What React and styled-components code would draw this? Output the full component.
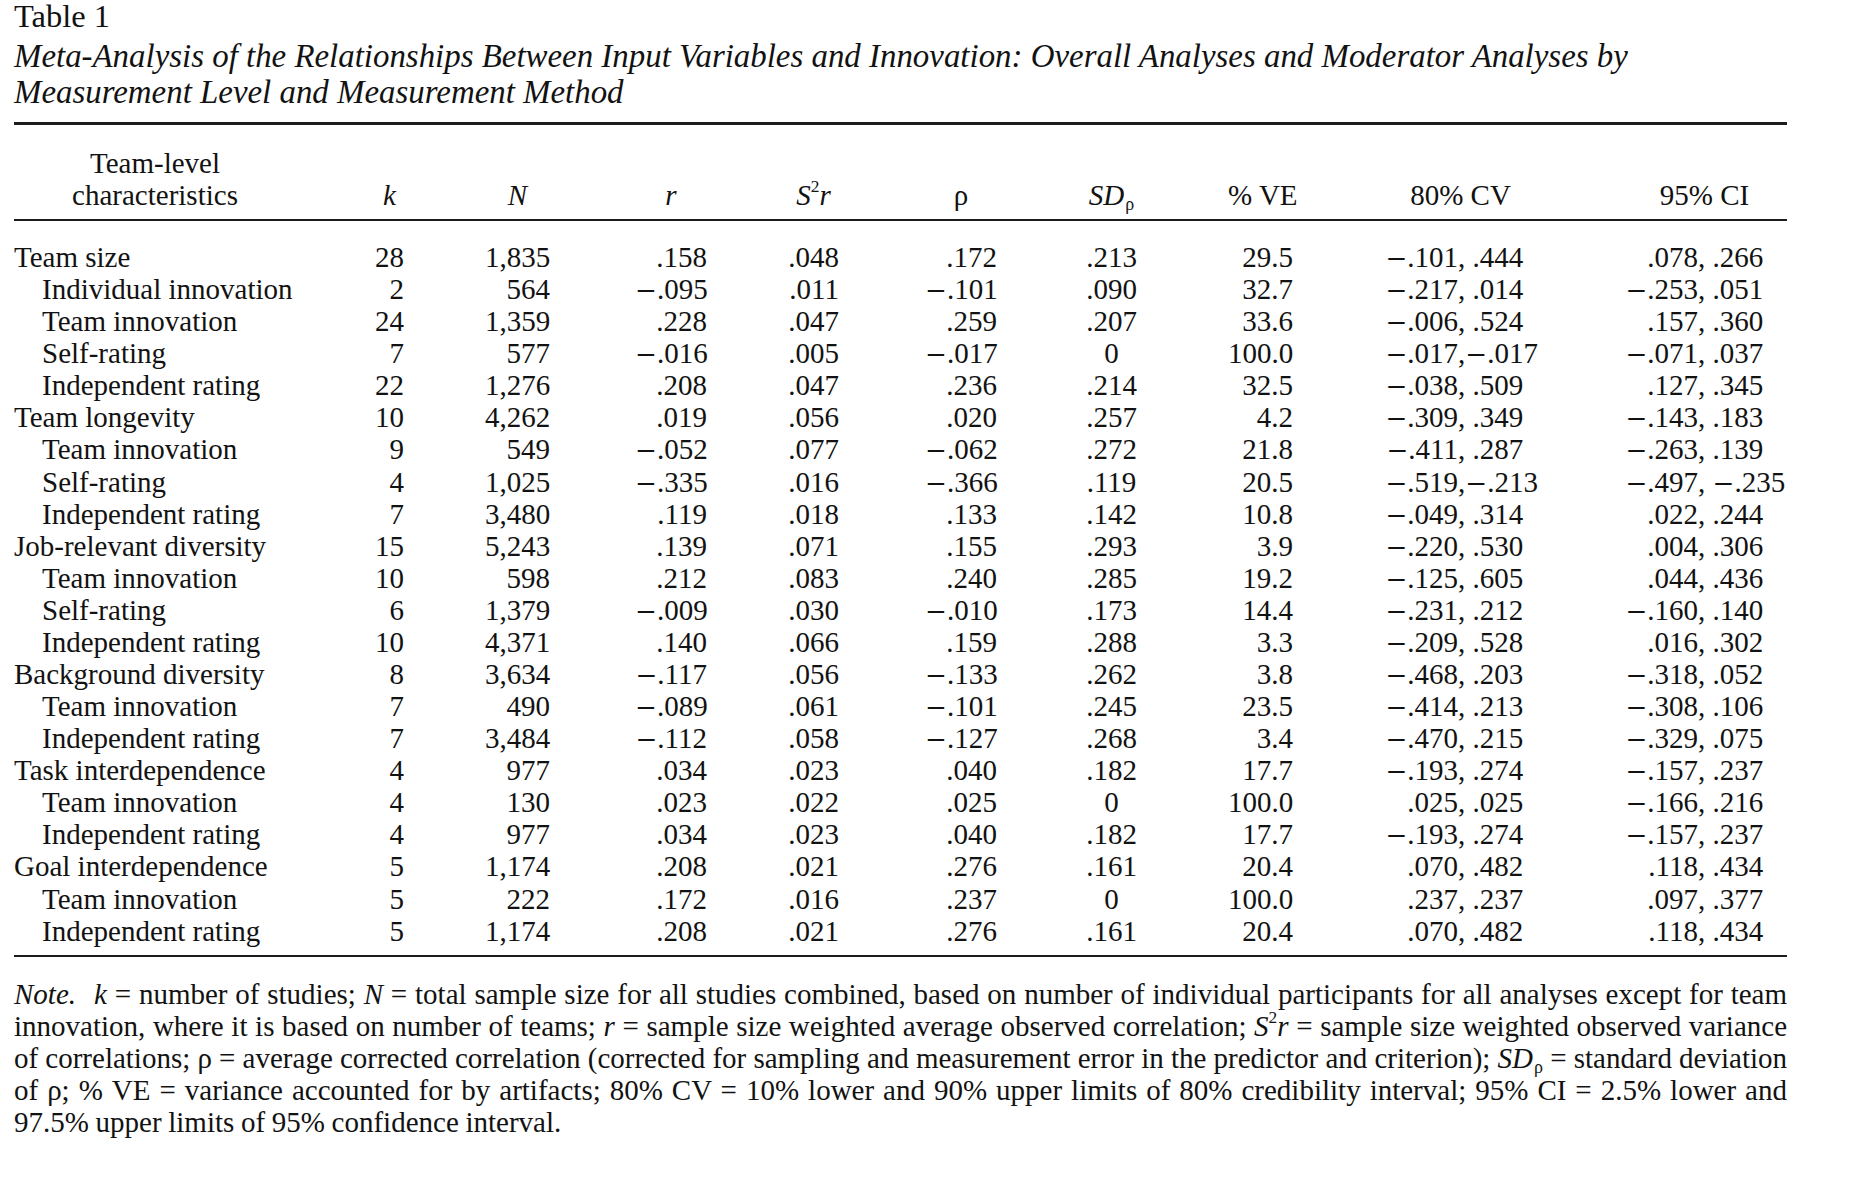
import React from 'react';
import styled, { createGlobalStyle } from 'styled-components';

const GlobalStyle = createGlobalStyle`
  html, body { margin: 0; padding: 0; background: #ffffff; }
  body {
    font-family: "Liberation Serif", "Times New Roman", serif;
    color: #121212;
  }
`;

const COLS = [
  { key: 'label', w: 282, pad: 0 },
  { key: 'k', w: 29, pad: 79, align: 'right' },
  { key: 'n', w: 65, pad: 81, align: 'right' },
  { key: 'r', w: 72, pad: 85, align: 'right' },
  { key: 's2r', w: 51, pad: 81, align: 'right' },
  { key: 'rho', w: 72, pad: 86, align: 'right' },
  { key: 'sd', w: 51, pad: 89, align: 'center' },
  { key: 've', w: 65, pad: 91, align: 'right' },
  { key: 'cv', w: 151, pad: 92, align: 'left', pair: true },
  { key: 'ci', w: 159, pad: 89, align: 'left', pair: true },
];

const TEMPLATE = COLS.map((c) => `${c.w + c.pad}px`).join(' ');

const Page = styled.main`
  width: 1773px;
  padding: 0 0 40px 14px;
`;

const TableNumber = styled.div`
  font-size: 32.5px;
  line-height: 32px;
`;

const Title = styled.h1`
  margin: 6px 0 0;
  font-size: 32.9px;
  font-weight: normal;
  font-style: italic;
  line-height: 36px;
`;

const Rule = styled.hr`
  border: 0;
  margin: ${(p) => p.$mt}px 0 0;
  height: ${(p) => p.$h}px;
  background: #1c1c1c;
`;

const HeadRow = styled.div`
  display: grid;
  grid-template-columns: ${TEMPLATE};
  margin-top: 22px;
  padding-bottom: 8px;
  font-size: 29px;
  line-height: 32px;
`;

const HeadCell = styled.div`
  padding-left: ${(p) => p.$pad}px;
  text-align: center;
  align-self: end;
  white-space: nowrap;
`;

const Body = styled.div`
  margin-top: 20px;
`;

const Row = styled.div`
  display: grid;
  grid-template-columns: ${TEMPLATE};
  font-size: 29px;
  line-height: 32.08px;
`;

const Cell = styled.div`
  padding-left: ${(p) => p.$pad}px;
  text-align: ${(p) => p.$align || 'left'};
  white-space: nowrap;
`;

const LabelCell = styled.div`
  padding-left: ${(p) => (p.$sub ? 28 : 0)}px;
  white-space: nowrap;
`;

const Lead = styled.span`
  display: inline-block;
  width: 73px;
  text-align: right;
`;

const Minus = styled.span`
  font-family: "DejaVu Serif", "Liberation Serif", serif;
  font-size: 0.9em;
  line-height: 0;
`;

const I = styled.i`
  font-style: italic;
`;

const Sup = styled.sup`
  font-size: 0.6em;
  line-height: 0;
  vertical-align: 0.72em;
`;

const Sub = styled.sub`
  font-size: 0.62em;
  line-height: 0;
  vertical-align: -0.3em;
  margin-left: 1px;
`;

const Note = styled.p`
  margin: 21px 0 0;
  font-size: 29px;
  line-height: 32px;
  width: 1773px;
`;

const NoteLine = styled.span`
  display: block;
  white-space: nowrap;
  word-spacing: -0.6px;
  text-align: justify;
  text-align-last: ${(p) => (p.$last ? 'left' : 'justify')};
`;

const NoteLabel = styled.i`
  margin-right: 18px;
`;

const M = '\u2212';

const ROWS = [
  ['Team size', 0, '28', '1,835', '.158', '.048', '.172', '.213', '29.5', `${M}.101, .444`, '.078, .266'],
  ['Individual innovation', 1, '2', '564', `${M}.095`, '.011', `${M}.101`, '.090', '32.7', `${M}.217, .014`, `${M}.253, .051`],
  ['Team innovation', 1, '24', '1,359', '.228', '.047', '.259', '.207', '33.6', `${M}.006, .524`, '.157, .360'],
  ['Self-rating', 1, '7', '577', `${M}.016`, '.005', `${M}.017`, '0', '100.0', `${M}.017,${M}.017`, `${M}.071, .037`],
  ['Independent rating', 1, '22', '1,276', '.208', '.047', '.236', '.214', '32.5', `${M}.038, .509`, '.127, .345'],
  ['Team longevity', 0, '10', '4,262', '.019', '.056', '.020', '.257', '4.2', `${M}.309, .349`, `${M}.143, .183`],
  ['Team innovation', 1, '9', '549', `${M}.052`, '.077', `${M}.062`, '.272', '21.8', `${M}.411, .287`, `${M}.263, .139`],
  ['Self-rating', 1, '4', '1,025', `${M}.335`, '.016', `${M}.366`, '.119', '20.5', `${M}.519,${M}.213`, `${M}.497, ${M}.235`],
  ['Independent rating', 1, '7', '3,480', '.119', '.018', '.133', '.142', '10.8', `${M}.049, .314`, '.022, .244'],
  ['Job-relevant diversity', 0, '15', '5,243', '.139', '.071', '.155', '.293', '3.9', `${M}.220, .530`, '.004, .306'],
  ['Team innovation', 1, '10', '598', '.212', '.083', '.240', '.285', '19.2', `${M}.125, .605`, '.044, .436'],
  ['Self-rating', 1, '6', '1,379', `${M}.009`, '.030', `${M}.010`, '.173', '14.4', `${M}.231, .212`, `${M}.160, .140`],
  ['Independent rating', 1, '10', '4,371', '.140', '.066', '.159', '.288', '3.3', `${M}.209, .528`, '.016, .302'],
  ['Background diversity', 0, '8', '3,634', `${M}.117`, '.056', `${M}.133`, '.262', '3.8', `${M}.468, .203`, `${M}.318, .052`],
  ['Team innovation', 1, '7', '490', `${M}.089`, '.061', `${M}.101`, '.245', '23.5', `${M}.414, .213`, `${M}.308, .106`],
  ['Independent rating', 1, '7', '3,484', `${M}.112`, '.058', `${M}.127`, '.268', '3.4', `${M}.470, .215`, `${M}.329, .075`],
  ['Task interdependence', 0, '4', '977', '.034', '.023', '.040', '.182', '17.7', `${M}.193, .274`, `${M}.157, .237`],
  ['Team innovation', 1, '4', '130', '.023', '.022', '.025', '0', '100.0', '.025, .025', `${M}.166, .216`],
  ['Independent rating', 1, '4', '977', '.034', '.023', '.040', '.182', '17.7', `${M}.193, .274`, `${M}.157, .237`],
  ['Goal interdependence', 0, '5', '1,174', '.208', '.021', '.276', '.161', '20.4', '.070, .482', '.118, .434'],
  ['Team innovation', 1, '5', '222', '.172', '.016', '.237', '0', '100.0', '.237, .237', '.097, .377'],
  ['Independent rating', 1, '5', '1,174', '.208', '.021', '.276', '.161', '20.4', '.070, .482', '.118, .434'],
];

function Num({ v }) {
  const parts = v.split(M);
  return parts.map((part, i) =>
    i === 0 ? (
      <React.Fragment key={i}>{part}</React.Fragment>
    ) : (
      <React.Fragment key={i}>
        <Minus>{M}</Minus>
        {part}
      </React.Fragment>
    )
  );
}

function Pair({ v }) {
  const idx = v.indexOf(',');
  const first = v.slice(0, idx);
  const rest = v.slice(idx);
  return (
    <>
      <Lead>
        <Num v={first} />
      </Lead>
      <Num v={rest} />
    </>
  );
}

const HEADERS = [
  <>Team-level<br />characteristics</>,
  <I>k</I>,
  <I>N</I>,
  <I>r</I>,
  <><I>S</I><Sup>2</Sup><I>r</I></>,
  <>ρ</>,
  <><I>SD</I><Sub>ρ</Sub></>,
  <>% VE</>,
  <>80% CV</>,
  <>95% CI</>,
];

export default function App() {
  return (
    <>
      <GlobalStyle />
      <Page>
        <TableNumber>Table 1</TableNumber>
        <Title>
          Meta-Analysis of the Relationships Between Input Variables and Innovation: Overall Analyses and Moderator Analyses by
          <br />
          Measurement Level and Measurement Method
        </Title>
        <Rule $mt={12} $h={3} />
        <HeadRow>
          {COLS.map((c, i) => (
            <HeadCell key={c.key} $pad={c.pad}>
              {HEADERS[i]}
            </HeadCell>
          ))}
        </HeadRow>
        <Rule $mt={0} $h={2} />
        <Body>
          {ROWS.map((row, ri) => (
            <Row key={ri}>
              <LabelCell $sub={row[1] === 1}>{row[0]}</LabelCell>
              {COLS.slice(1).map((c, ci) => {
                const v = row[ci + 2];
                return (
                  <Cell key={c.key} $pad={c.pad} $align={c.align}>
                    {c.pair ? <Pair v={v} /> : <Num v={v} />}
                  </Cell>
                );
              })}
            </Row>
          ))}
        </Body>
        <Rule $mt={8} $h={2} />
        <Note>
          <NoteLine>
            <NoteLabel>Note.</NoteLabel>
            <I>k</I> = number of studies; <I>N</I> = total sample size for all studies combined, based on number of individual participants for all analyses except for team
          </NoteLine>
          <NoteLine>
            innovation, where it is based on number of teams; <I>r</I> = sample size weighted average observed correlation; <I>S</I>
            <Sup>2</Sup>
            <I>r</I> = sample size weighted observed variance
          </NoteLine>
          <NoteLine>
            of correlations; ρ = average corrected correlation (corrected for sampling and measurement error in the predictor and criterion); <I>SD</I>
            <Sub>ρ</Sub> = standard deviation
          </NoteLine>
          <NoteLine>
            of ρ; % VE = variance accounted for by artifacts; 80% CV = 10% lower and 90% upper limits of 80% credibility interval; 95% CI = 2.5% lower and
          </NoteLine>
          <NoteLine $last>97.5% upper limits of 95% confidence interval.</NoteLine>
        </Note>
      </Page>
    </>
  );
}
